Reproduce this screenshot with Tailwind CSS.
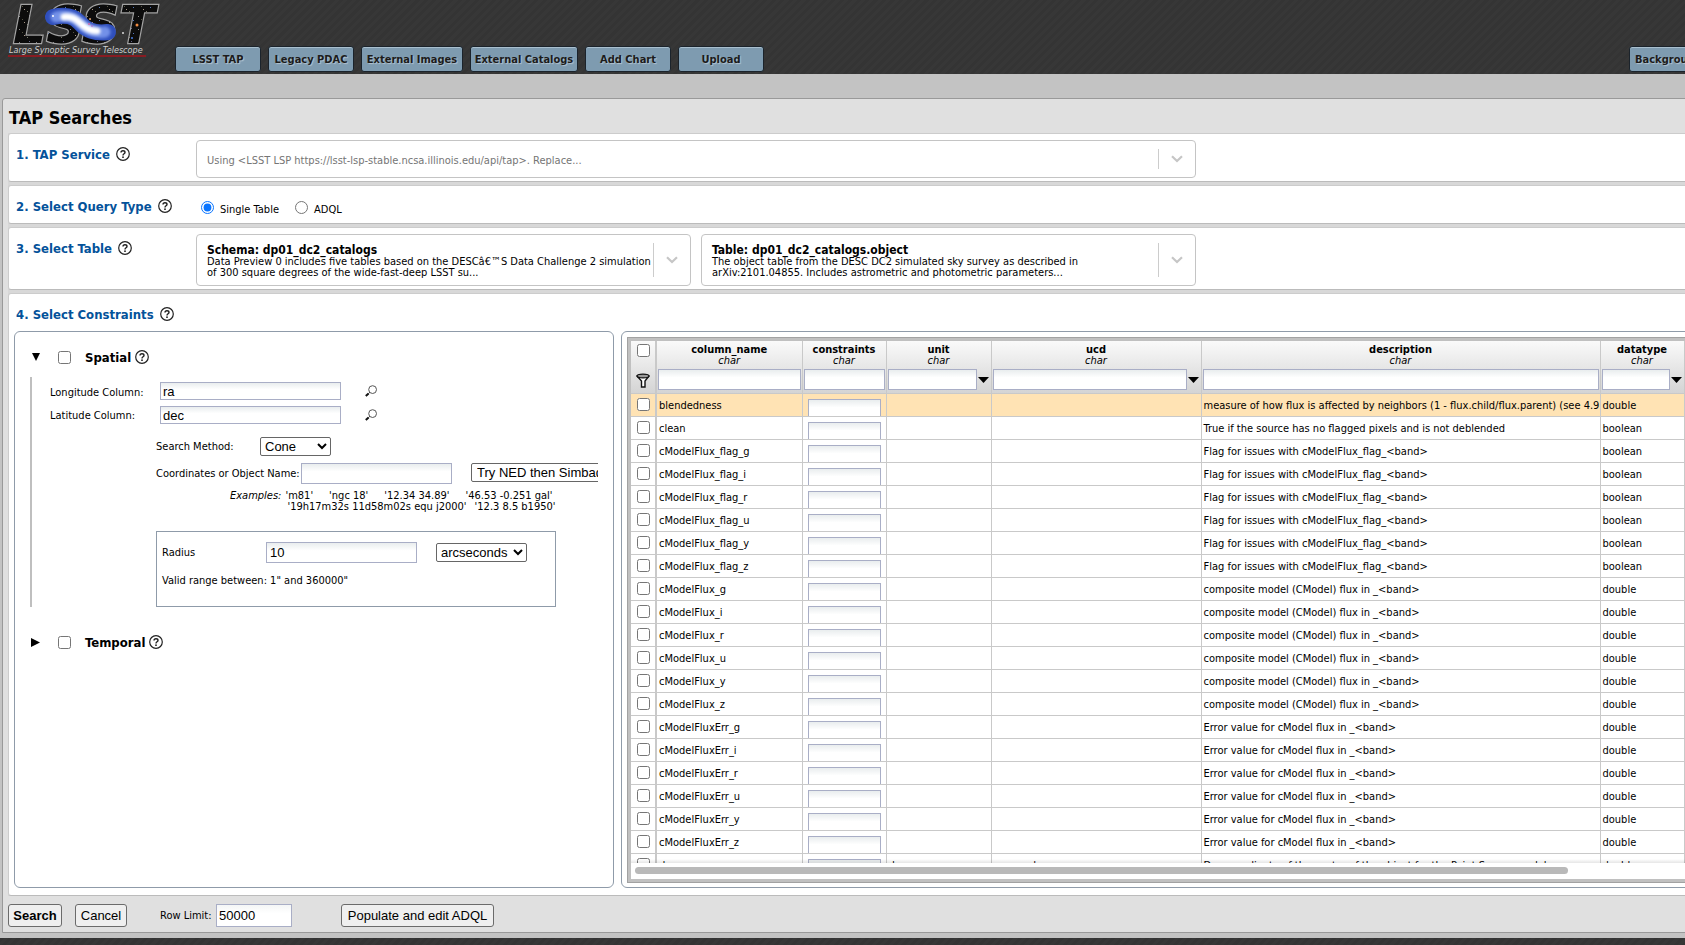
<!DOCTYPE html>
<html lang="en">
<head>
<meta charset="utf-8">
<title>TAP Searches</title>
<script src="https://cdn.jsdelivr.net/npm/@tailwindcss/browser@4"></script>
</head>
<body class="flex h-screen flex-col overflow-hidden bg-[#c3c3c3] font-['DejaVu_Sans_Condensed','Noto_Sans',sans-serif] text-[11px] leading-[11px] text-black">

<svg class="hidden" aria-hidden="true">
  <symbol id="help" viewBox="0 0 14 14">
    <circle cx="7" cy="7" r="6.3" fill="none" stroke="currentColor" stroke-width="1.2"/>
    <path d="M5 5.6C5 4.3 5.9 3.7 7 3.7S9 4.4 9 5.4C9 6.8 7 6.7 7 8.4" fill="none" stroke="currentColor" stroke-width="1.4"/>
    <circle cx="7" cy="10.2" r="0.9" fill="currentColor"/>
  </symbol>
  <symbol id="chevron" viewBox="0 0 12 8">
    <path d="M1 1.2 6 6l5-4.8" fill="none" stroke="currentColor" stroke-width="2.2"/>
  </symbol>
  <symbol id="magnifier" viewBox="0 0 12 12">
    <circle cx="7.6" cy="4.6" r="3.9" fill="none" stroke="#555" stroke-width="1"/>
    <path d="M4.8 7.4 3.4 8.6" stroke="#333" stroke-width="1"/>
    <path d="M3.6 8.4.8 11" stroke="#111" stroke-width="2"/>
  </symbol>
</svg>

<header class="flex h-[74px] shrink-0 items-end overflow-hidden bg-[#353535] bg-[repeating-linear-gradient(135deg,#343434_0px,#343434_3px,#373737_3px,#373737_6px)] pb-[2px]">
  <a href="#" class="w-[175px] shrink-0 self-start" aria-label="LSST home">
    <svg width="172" height="66" viewBox="0 0 172 66">
      <defs>
        <filter id="soft" x="-20%" y="-40%" width="140%" height="180%"><feGaussianBlur stdDeviation="1.6"/></filter>
        <pattern id="stars" width="17" height="13" patternUnits="userSpaceOnUse">
          <rect width="17" height="13" fill="#0c0c0c"/>
          <rect x="2" y="3" width="1" height="1" fill="#888"/><rect x="7" y="9" width="1" height="1" fill="#a98"/>
          <rect x="12" y="2" width="1" height="1" fill="#668"/><rect x="14" y="7" width="1" height="1" fill="#57b"/>
          <rect x="5" y="6" width="1" height="1" fill="#554"/><rect x="10" y="11" width="1" height="1" fill="#776"/>
        </pattern>
      </defs>
      <text x="13" y="43" class="font-['DejaVu_Sans',sans-serif] text-[52px] leading-none font-bold italic" fill="url(#stars)" stroke="#a3a3a3" stroke-width="2.4" paint-order="stroke">LSST</text>
      <g fill="none" stroke-linecap="round" stroke-linejoin="round">
        <path d="M53 17C66 14 74 16 80 23S96 34 108 32" stroke="#2f4fbd" stroke-width="16"/>
        <path d="M56 17C67 14 74 17 80 23S95 34 105 32" stroke="#7391e8" stroke-width="11" filter="url(#soft)"/>
        <path d="M64 17C71 16 76 19 80 23S90 31 97 31" stroke="#fff" stroke-width="7" filter="url(#soft)"/>
      </g>
      <circle cx="89" cy="24" r="1" fill="#d76ba8"/><circle cx="90" cy="19" r="1" fill="#e0a070"/><circle cx="92" cy="26" r="0.8" fill="#b05ac8"/>
      <circle cx="137" cy="25" r="1.5" fill="#f08a40"/><circle cx="123" cy="33" r="1" fill="#ddd"/><circle cx="132" cy="38" r="1" fill="#4a7de0"/><circle cx="53" cy="16" r="1" fill="#fff"/>
      <text x="9" y="53" class="text-[9px] leading-none italic" fill="#d0d0d0">Large Synoptic Survey Telescope</text>
      <path d="M8 56h138" stroke="#a5141c" stroke-width="1.6"/>
    </svg>
  </a>
  <nav class="flex flex-1 gap-[7px]" id="tabs"></nav>
  <button class="-mr-[74px] h-[26px] w-[130px] shrink-0 rounded-[3px] border border-[#1b232b] bg-[#7e9bb0] pl-[5px] text-left text-[11px] font-bold whitespace-nowrap text-[#1c1c1c] shadow-[inset_0_1px_0_#a9bfce] [text-shadow:1px_1px_1px_#b4c4d0]">Background Monitor</button>
</header>

<main class="mt-6 mb-[5px] ml-[2px] flex min-h-0 w-[calc(100%+32px)] flex-1 flex-col rounded-tl-[3px] border border-[#999] bg-[#e0e0e0] pl-[5px]">
  <h1 class="h-[34px] pt-[10px] pl-px text-[18px] leading-[18px] font-bold">TAP Searches</h1>

  <div class="flex min-h-0 flex-1 flex-col gap-[3px] bg-[#d8d8d8]">
    <section class="flex h-[49px] shrink-0 rounded-[3px] border border-[#ccc] border-b-[#bbb] bg-white pt-[6px] pl-[7px]">
      <label for="service" class="flex h-7 w-[180px] items-center gap-[6px] text-[13px] font-bold text-[#04529a]">1. TAP Service <svg class="size-[14px] text-[#222]"><use href="#help"/></svg></label>
      <div class="grid h-[38px] w-[1000px]">
        <select id="service" class="col-start-1 row-start-1 appearance-none rounded-[4px] border border-[#c4c4c4] bg-white pt-[2px] pl-[10px] text-[11px] text-[#757575]"><option>Using &lt;LSST LSP https://lsst-lsp-stable.ncsa.illinois.edu/api/tap&gt;. Replace...</option></select>
        <span class="pointer-events-none col-start-1 row-start-1 flex h-5 w-[38px] items-center self-center justify-self-end border-l border-[#ccc] pl-3 text-[#c6c6c6]"><svg class="h-2 w-3"><use href="#chevron"/></svg></span>
      </div>
    </section>

    <section class="flex h-[39px] shrink-0 rounded-[3px] border border-[#ccc] border-b-[#bbb] bg-white pt-[6px] pl-[7px]">
      <h2 class="flex h-7 w-[185px] items-center gap-[6px] text-[13px] font-bold text-[#04529a]">2. Select Query Type <svg class="size-[14px] text-[#222]"><use href="#help"/></svg></h2>
      <div class="flex h-[30px] items-center gap-4">
        <label class="flex items-center gap-[6px]"><input type="radio" name="qt" checked class="size-[13px] accent-[#0a75ff]"><span class="pt-[5px]">Single Table</span></label>
        <label class="flex items-center gap-[6px]"><input type="radio" name="qt" class="size-[13px]"><span class="pt-[5px]">ADQL</span></label>
      </div>
    </section>

    <section class="flex h-[63px] shrink-0 rounded-[3px] border border-[#ccc] border-b-[#bbb] bg-white pt-[6px] pl-[7px]">
      <h2 class="flex h-7 w-[180px] items-center gap-[6px] text-[13px] font-bold text-[#04529a]">3. Select Table <svg class="size-[14px] text-[#222]"><use href="#help"/></svg></h2>
      <div class="flex gap-[10px]">
        <button aria-haspopup="listbox" class="flex h-[52px] w-[495px] items-center rounded-[4px] border border-[#c4c4c4] pl-[10px] text-left">
          <span class="flex-1 pt-[2px] whitespace-nowrap"><b class="block text-[12px] leading-[12px]">Schema: dp01_dc2_catalogs</b>Data Preview 0 includes five tables based on the DESCâ€™S Data Challenge 2 simulation<br>of 300 square degrees of the wide-fast-deep LSST su...</span>
          <span class="flex h-[34px] w-[37px] shrink-0 items-center border-l border-[#ccc] pl-3 text-[#c6c6c6]"><svg class="h-2 w-3"><use href="#chevron"/></svg></span>
        </button>
        <button aria-haspopup="listbox" class="flex h-[52px] w-[495px] items-center rounded-[4px] border border-[#c4c4c4] pl-[10px] text-left">
          <span class="flex-1 pt-[2px] whitespace-nowrap"><b class="block text-[12px] leading-[12px]">Table: dp01_dc2_catalogs.object</b>The object table from the DESC DC2 simulated sky survey as described in<br>arXiv:2101.04855. Includes astrometric and photometric parameters...</span>
          <span class="flex h-[34px] w-[37px] shrink-0 items-center border-l border-[#ccc] pl-3 text-[#c6c6c6]"><svg class="h-2 w-3"><use href="#chevron"/></svg></span>
        </button>
      </div>
    </section>

    <section class="flex min-h-0 flex-1 flex-col rounded-[3px] border border-[#ccc] border-b-[#bbb] bg-white pt-[6px] pb-[7px] pl-[5px]">
      <h2 class="mb-[3px] ml-[2px] flex h-7 shrink-0 items-center gap-[6px] text-[13px] font-bold text-[#04529a]">4. Select Constraints <svg class="size-[14px] text-[#222]"><use href="#help"/></svg></h2>
      <div class="flex min-h-0 flex-1 gap-[7px]">

        <div class="w-[600px] shrink-0 rounded-md border border-[#8f9ba9] pt-[14px] pr-[15px] pl-[15px]">
          <div class="flex h-[22px] items-center">
            <button aria-label="Collapse" class="w-7 pl-[2px]"><svg class="size-2" viewBox="0 0 9 9"><path d="M0 0h9L4.5 9z"/></svg></button>
            <label class="flex items-center text-[13px] font-bold"><input type="checkbox" class="mr-[14px] size-[13px]">Spatial</label>
            <svg class="ml-1 size-[14px] text-[#222]"><use href="#help"/></svg>
          </div>

          <div class="mt-[9px] flex h-[230px] flex-col overflow-hidden border-l-2 border-[#bfbfbf] pt-[5px] pl-[18px]">
            <div class="flex h-6 items-start">
              <label for="lon" class="w-[110px] pt-[5px]">Longitude Column:</label>
              <input id="lon" value="ra" class="h-[18px] w-[181px] border border-[#a9aec6] bg-linear-to-b from-[#e9edee] to-white to-40% px-[2px] font-['Liberation_Sans',sans-serif] text-[13px]">
              <button aria-label="Find longitude column" class="ml-6 pt-[3px]"><svg class="size-3"><use href="#magnifier"/></svg></button>
            </div>
            <div class="flex h-6 items-start">
              <label for="lat" class="w-[110px] pt-1">Latitude Column:</label>
              <input id="lat" value="dec" class="h-[18px] w-[181px] border border-[#a9aec6] bg-linear-to-b from-[#e9edee] to-white to-40% px-[2px] font-['Liberation_Sans',sans-serif] text-[13px]">
              <button aria-label="Find latitude column" class="ml-6 pt-[3px]"><svg class="size-3"><use href="#magnifier"/></svg></button>
            </div>
            <div class="pl-[106px]">
              <div class="mt-[7px] flex h-[19px] items-center">
                <label for="method" class="w-[104px]">Search Method:</label>
                <select id="method" class="h-[19px] w-[71px] rounded-[2px] border border-[#666] bg-white font-['Liberation_Sans',sans-serif] text-[13px]"><option>Cone</option></select>
              </div>
              <div class="mt-[7px] flex h-[21px] items-center">
                <label for="coords" class="w-[145px] shrink-0 whitespace-nowrap">Coordinates or Object Name:</label>
                <input id="coords" class="h-[21px] w-[151px] shrink-0 border border-[#a9aec6] bg-linear-to-b from-[#e9edee] to-white to-40%">
                <select aria-label="Name resolver" class="ml-[19px] h-[19px] w-[160px] shrink-0 self-start rounded-[2px] border border-[#666] bg-white pl-px font-['Liberation_Sans',sans-serif] text-[13px]"><option>Try NED then Simbad</option></select>
              </div>
              <div class="mt-[6px] flex pl-[74px] whitespace-pre"><i>Examples:</i><div class="ml-1"><div class="flex gap-4"><span>'m81'</span><span>'ngc 18'</span><span>'12.34 34.89'</span><span>'46.53 -0.251 gal'</span></div><div class="flex gap-2 pl-[2px]"><span>'19h17m32s 11d58m02s equ j2000'</span><span>'12.3 8.5 b1950'</span></div></div></div>
              <div class="mt-[19px] h-[76px] w-[400px] border border-[#8f9ba9] pt-[10px] pl-[5px]">
                <div class="flex h-[21px] items-center">
                  <label for="radius" class="w-[104px]">Radius</label>
                  <input id="radius" value="10" class="h-[21px] w-[151px] border border-[#a9aec6] bg-linear-to-b from-[#e9edee] to-white to-40% px-[3px] font-['Liberation_Sans',sans-serif] text-[13px]">
                  <select aria-label="Radius unit" class="ml-[19px] h-[19px] w-[91px] rounded-[2px] border border-[#666] bg-white font-['Liberation_Sans',sans-serif] text-[13px]"><option>arcseconds</option></select>
                </div>
                <p class="mt-3">Valid range between: 1" and 360000"</p>
              </div>
            </div>
          </div>

          <div class="mt-[24px] flex h-[22px] items-center">
            <button aria-label="Expand" class="w-7 pl-px"><svg class="size-[9px]" viewBox="0 0 9 9"><path d="M0 0v9l9-4.5z"/></svg></button>
            <label class="flex items-center text-[13px] font-bold"><input type="checkbox" class="mr-[14px] size-[13px]">Temporal</label>
            <svg class="ml-1 size-[14px] text-[#222]"><use href="#help"/></svg>
          </div>
        </div>

        <div class="min-w-0 flex-1 rounded-md border border-[#8f9ba9] px-[5px] pt-[5px] pb-1">
          <div class="flex h-full flex-col border border-[#a2a2a2] bg-[#c0c0c0] p-[3px]">
            <div class="relative min-h-0 flex-1 overflow-hidden bg-white">
              <table class="w-[1053px] table-fixed border-collapse">
                <colgroup><col class="w-[25px]"><col class="w-[146px]"><col class="w-[84px]"><col class="w-[105px]"><col class="w-[210px]"><col class="w-[399px]"><col class="w-[84px]"></colgroup>
                <thead><tr id="head" class="h-[52px] bg-linear-to-b from-[#fafafa] to-[#d4d4d4]">
                  <th class="border-r-2 border-b border-[#c9c9c9] p-0 align-top"><div class="flex h-[50px] flex-col items-center justify-between pt-[3px] pb-[3px]"><input type="checkbox" aria-label="Select all rows" class="size-[13px]"><svg class="h-[15px] w-[14px]" viewBox="0 0 14 15"><path d="M1 3C1 1.5 13 1.5 13 3L9 8v6H5.500V8z" fill="#fff" stroke="#111" stroke-width="1.4"/><ellipse cx="7" cy="3" rx="6" ry="1.900" fill="#999" stroke="#111" stroke-width="1.200"/></svg></div></th>
                </tr></thead>
                <tbody id="rows"></tbody>
              </table>
              <div class="pointer-events-none absolute inset-x-0 bottom-0 h-1 bg-linear-to-b from-transparent to-black/10"></div>
            </div>
            <div class="h-4 bg-white pt-1 pl-1"><div class="h-[7px] w-[933px] rounded bg-[#b9b9b9]"></div></div>
          </div>
        </div>
      </div>
    </section>
  </div>

  <footer class="flex h-9 shrink-0 items-center pt-[2px] font-['Liberation_Sans',sans-serif] text-[13px]">
    <button class="h-[23px] w-[54px] rounded-[3px] border border-[#6b6b6b] bg-[#efefef] font-bold">Search</button>
    <button class="ml-[13px] h-[23px] w-[52px] rounded-[3px] border border-[#6b6b6b] bg-[#efefef]">Cancel</button>
    <label for="limit" class="ml-[33px] w-[56px] font-['DejaVu_Sans_Condensed','Noto_Sans',sans-serif] text-[11px] whitespace-nowrap">Row Limit:</label>
    <input id="limit" value="50000" class="h-[23px] w-[76px] border border-[#a9aec6] bg-linear-to-b from-[#f4f6f6] to-white to-40% px-[2px]">
    <button class="ml-[49px] h-[23px] w-[153px] rounded-[3px] border border-[#6b6b6b] bg-[#efefef]">Populate and edit ADQL</button>
  </footer>
</main>
<div class="h-[7px] shrink-0 bg-[#353535] bg-[repeating-linear-gradient(135deg,#343434_0px,#343434_3px,#373737_3px,#373737_6px)]"></div>

<script>
const tabs = [['LSST TAP','w-[86px]'],['Legacy PDAC','w-[86px]'],['External Images','w-[102px]'],['External Catalogs','w-[108px]'],['Add Chart','w-[86px]'],['Upload','w-[86px]']];
document.getElementById('tabs').innerHTML = tabs.map(([t, w]) =>
  `<button class="${w} h-[26px] rounded-[3px] border border-[#1b232b] bg-[#7e9bb0] text-[11px] font-bold whitespace-nowrap text-[#1c1c1c] shadow-[inset_0_1px_0_#a9bfce] [text-shadow:1px_1px_1px_#b4c4d0]">${t}</button>`).join('');

const heads = [['column_name'],['constraints'],['unit',1],['ucd',1],['description'],['datatype',1]];
document.getElementById('head').insertAdjacentHTML('beforeend', heads.map(([h, menu]) =>
  `<th class="border-r border-b border-[#c9c9c9] p-0 align-top"><div class="pt-[3px] font-bold">${h}</div><div class="font-normal italic">char</div>
   <div class="mt-[3px] flex items-center gap-px px-px"><input aria-label="Filter ${h}" class="h-[21px] min-w-0 flex-1 border border-[#a9aec6] bg-linear-to-b from-[#e9edee] to-white to-40%">${menu ? `<button aria-label="${h} values" class="w-3"><svg class="h-[6px] w-[11px]" viewBox="0 0 11 6"><path d="M0 0h11L5.500 6z"/></svg></button>` : ''}</div></th>`).join(''));

const esc = s => s.replace(/</g, '&lt;');
const bands = ['g','i','r','u','y','z'];
const data = [
  ['blendedness','measure of how flux is affected by neighbors (1 - flux.child/flux.parent) (see 4.9.11)','double'],
  ['clean','True if the source has no flagged pixels and is not deblended','boolean'],
  ...bands.map(b => ['cModelFlux_flag_' + b, 'Flag for issues with cModelFlux_flag_<band>', 'boolean']),
  ...bands.map(b => ['cModelFlux_' + b, 'composite model (CModel) flux in _<band>', 'double']),
  ...bands.map(b => ['cModelFluxErr_' + b, 'Error value for cModel flux in _<band>', 'double']),
  ['dec','Dec-coordinate of the center of the object for the Point Source model','double','deg','pos.eq.dec'],
];
document.getElementById('rows').innerHTML = data.map(([n, d, t, u = '', c = ''], i) => {
  const td = s => `<td class="overflow-hidden border-r border-b border-[#c9c9c9] pt-[2px] pr-0 pb-0 pl-[2px] whitespace-nowrap">${esc(s)}</td>`;
  return `<tr class="h-[23px] ${i ? 'bg-white' : 'bg-[#ffe3b4]'}">
    <td class="border-r-2 border-b border-[#c9c9c9] p-0"><input type="checkbox" aria-label="Select ${n}" class="mx-auto block size-[13px]"></td>${td(n)}
    <td class="border-r border-b border-[#c9c9c9] p-0"><div class="h-[22px] overflow-hidden px-[5px] pt-[5px]"><input aria-label="Constraint for ${n}" class="block h-[21px] w-full border border-[#a9aec6] bg-linear-to-b from-[#e9edee] to-white to-40%"></div></td>
    ${td(u)}${td(c)}${td(d)}${td(t)}</tr>`;
}).join('');
</script>
</body>
</html>
